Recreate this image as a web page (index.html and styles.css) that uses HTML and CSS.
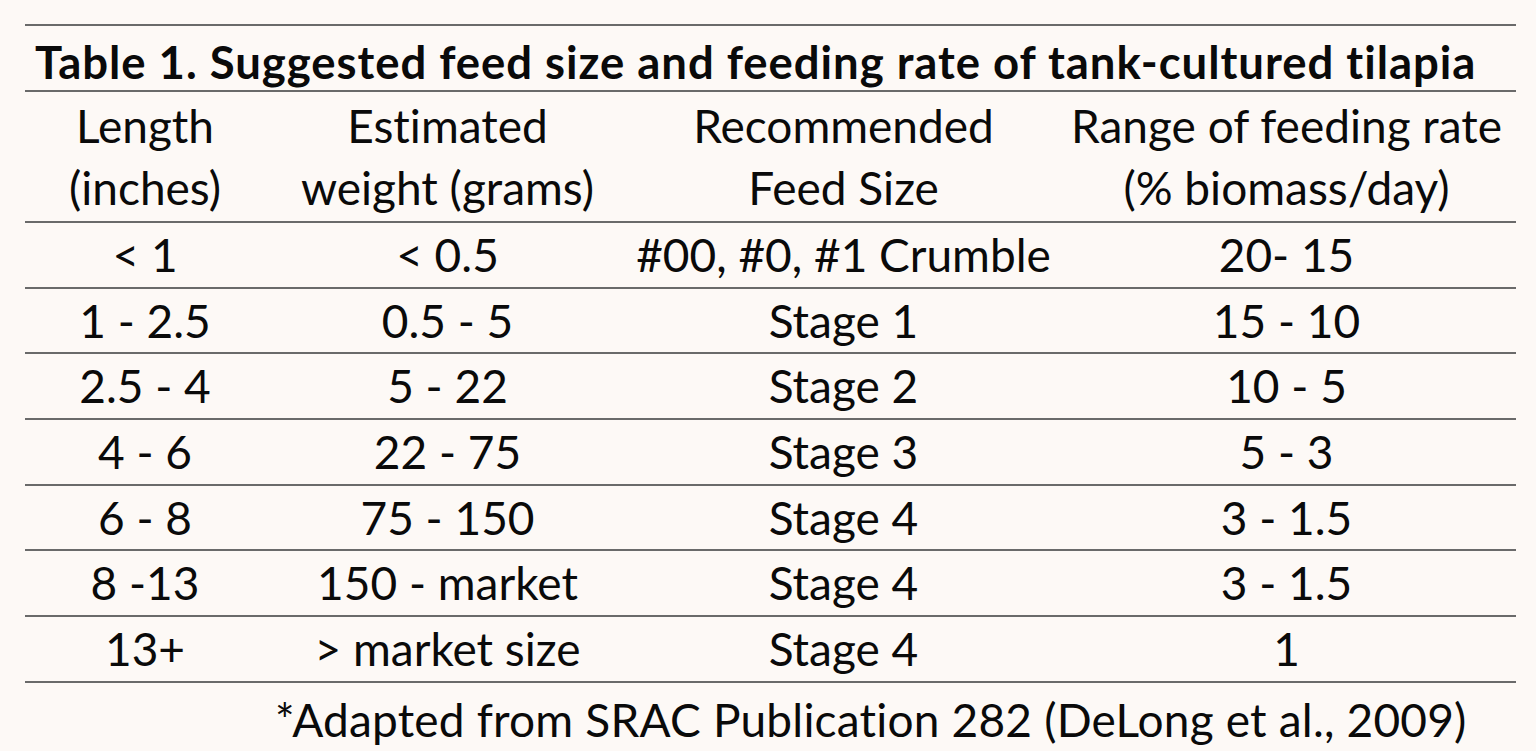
FILE: index.html
```html
<!DOCTYPE html>
<html lang="en">
<head>
<meta charset="utf-8">
<title>Table 1. Suggested feed size and feeding rate of tank-cultured tilapia</title>
<link rel="stylesheet" href="styles.css">
</head>
<body>
<div class="sheet">
  <div class="table">
    <div class="title">Table 1. Suggested feed size and feeding rate of tank-cultured tilapia</div>
    <div class="row head">
      <div class="cell">Length<br>(inches)</div>
      <div class="cell">Estimated<br>weight (grams)</div>
      <div class="cell">Recommended<br>Feed Size</div>
      <div class="cell">Range of feeding rate<br>(% biomass/day)</div>
    </div>
    <div class="row">
      <div class="cell">&lt; 1</div>
      <div class="cell">&lt; 0.5</div>
      <div class="cell">#00, #0, #1 Crumble</div>
      <div class="cell">20- 15</div>
    </div>
    <div class="row">
      <div class="cell">1 - 2.5</div>
      <div class="cell">0.5 - 5</div>
      <div class="cell">Stage 1</div>
      <div class="cell">15 - 10</div>
    </div>
    <div class="row">
      <div class="cell">2.5 - 4</div>
      <div class="cell">5 - 22</div>
      <div class="cell">Stage 2</div>
      <div class="cell">10 - 5</div>
    </div>
    <div class="row">
      <div class="cell">4 - 6</div>
      <div class="cell">22 - 75</div>
      <div class="cell">Stage 3</div>
      <div class="cell">5 - 3</div>
    </div>
    <div class="row">
      <div class="cell">6 - 8</div>
      <div class="cell">75 - 150</div>
      <div class="cell">Stage 4</div>
      <div class="cell">3 - 1.5</div>
    </div>
    <div class="row">
      <div class="cell">8 -13</div>
      <div class="cell">150 - market</div>
      <div class="cell">Stage 4</div>
      <div class="cell">3 - 1.5</div>
    </div>
    <div class="row">
      <div class="cell">13+</div>
      <div class="cell">&gt; market size</div>
      <div class="cell">Stage 4</div>
      <div class="cell">1</div>
    </div>
  </div>
  <div class="note">*Adapted from SRAC Publication 282 (DeLong et al., 2009)</div>
</div>
</body>
</html>
```
FILE: styles.css
```css
html, body {
  margin: 0;
  padding: 0;
  background: #fdf9f6;
}
body {
  font-family: Lato, "Open Sans", "Liberation Sans", sans-serif;
  font-variant-ligatures: none;
  color: #0a0a0a;
  width: 1536px;
  height: 751px;
  overflow: hidden;
}
.sheet {
  padding: 24px 0 0 25px;
}
.table {
  width: 1491px;
  border-top: 2px solid #6a6a6a;
}
.title {
  height: 64px;
  border-bottom: 2px solid #6a6a6a;
  box-sizing: content-box;
  padding-left: 10px;
  font-weight: 700;
  font-size: 45.5px;
  letter-spacing: 0.95px;
  line-height: 72px;
  white-space: nowrap;
  overflow: hidden;
}
.row {
  display: grid;
  grid-template-columns: 240px 365px 427px 459px;
  height: 63.7px;
  border-bottom: 2px solid #6a6a6a;
  box-sizing: content-box;
}
.row.head {
  height: 129px;
}
.cell {
  display: flex;
  align-items: center;
  justify-content: center;
  text-align: center;
  font-size: 46px;
  line-height: 62px;
  white-space: nowrap;
}
.note {
  padding-left: 250px;
  font-size: 46px;
  letter-spacing: 0.2px;
  line-height: 74px;
  white-space: nowrap;
}
```
